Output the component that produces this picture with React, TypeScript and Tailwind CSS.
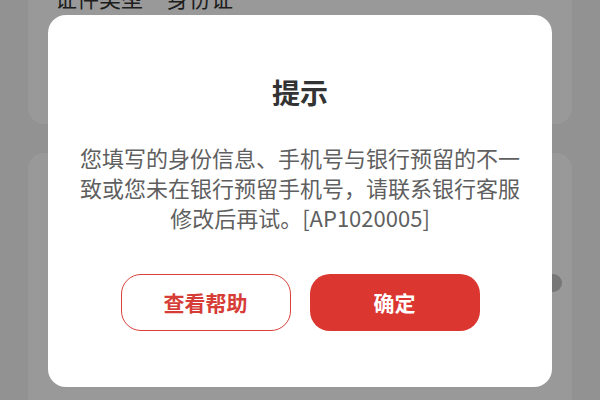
import React from 'react';

const App = () => {
    return (
        <div
            className="relative w-[600px] h-[400px] overflow-hidden bg-[#f4f4f4]"
            style={{ fontFamily: '"Noto Sans CJK SC", "Noto Sans", sans-serif' }}
        >
            {/* page underneath */}
            <div className="flex flex-col gap-[29px] px-[28px]">
                <div className="bg-white rounded-[16px] h-[164px] mt-[-40px] pt-[22px] px-[27px] flex items-start text-[22px] leading-[30px] text-[#333]">
                    <span className="w-[112px]">证件类型</span>
                    <span>身份证</span>
                </div>
                <div className="bg-white rounded-[16px] h-[300px] pt-[121px] pr-[10px] flex justify-end items-start">
                    <div className="w-[18px] h-[18px] rounded-full bg-[#c6c6c6]" />
                </div>
            </div>

            {/* mask */}
            <div className="absolute inset-0 bg-black/40" />

            {/* dialog */}
            <div className="absolute left-[48px] top-[15px] w-[504px] h-[372px] bg-white rounded-[18px] px-[30px] pt-[58px] flex flex-col items-center">
                <h2 className="text-[28px] leading-[38px] font-bold text-[#333]">提示</h2>
                <p className="mt-[31px] w-[444px] text-center text-[22px] leading-[30px] text-[#5f5f5f]">
                    您填写的身份信息、手机号与银行预留的不一致或您未在银行预留手机号，请联系银行客服修改后再试。[AP1020005]
                </p>
                <div className="mt-[42px] flex gap-[19px]">
                    <button className="w-[170px] h-[57px] rounded-[20px] border-[1.5px] border-[#d8403a] text-[#d63d36] text-[21px] font-bold">
                        查看帮助
                    </button>
                    <button className="w-[170px] h-[57px] rounded-[20px] bg-[#db3630] text-white text-[21px] font-bold">
                        确定
                    </button>
                </div>
            </div>
        </div>
    );
};

export default App;
